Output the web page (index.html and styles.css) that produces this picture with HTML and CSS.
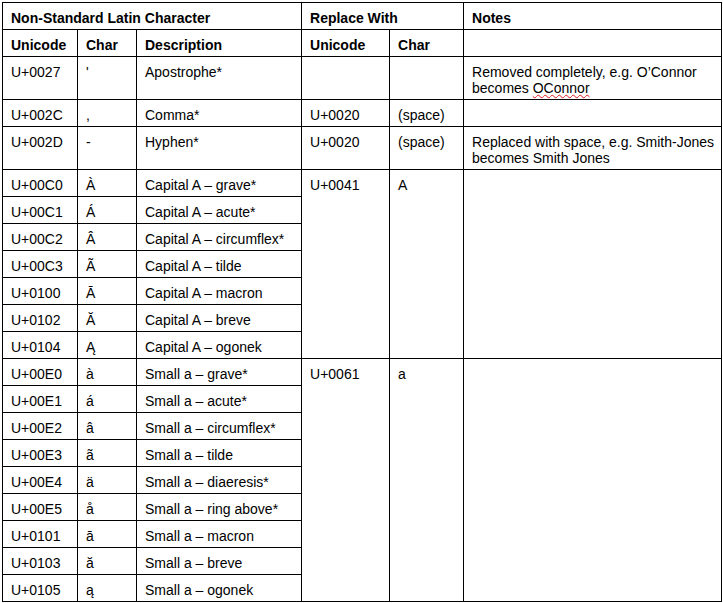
FILE: index.html
```html
<!DOCTYPE html>
<html lang="en">
<head>
<meta charset="utf-8">
<title>Non-Standard Latin Characters</title>
<link rel="stylesheet" href="styles.css">
</head>
<body>
<table class="chars">
  <colgroup>
    <col class="c-uni">
    <col class="c-char">
    <col class="c-desc">
    <col class="c-runi">
    <col class="c-rchar">
    <col class="c-notes">
  </colgroup>
  <thead>
    <tr class="head">
      <th colspan="3">Non-Standard Latin Character</th>
      <th colspan="2">Replace With</th>
      <th>Notes</th>
    </tr>
    <tr class="head">
      <th>Unicode</th>
      <th>Char</th>
      <th>Description</th>
      <th>Unicode</th>
      <th>Char</th>
      <th></th>
    </tr>
  </thead>
  <tbody>
    <tr>
      <td>U+0027</td><td>'</td><td>Apostrophe*</td><td></td><td></td>
      <td>Removed completely, e.g. O’Connor becomes <span class="spell">OConnor</span></td>
    </tr>
    <tr>
      <td>U+002C</td><td>,</td><td>Comma*</td><td>U+0020</td><td>(space)</td><td></td>
    </tr>
    <tr>
      <td>U+002D</td><td>-</td><td>Hyphen*</td><td>U+0020</td><td>(space)</td>
      <td>Replaced with space, e.g. Smith-Jones<br>becomes Smith Jones</td>
    </tr>
    <tr>
      <td>U+00C0</td><td>À</td><td>Capital A – grave*</td>
      <td rowspan="7">U+0041</td><td rowspan="7">A</td><td rowspan="7"></td>
    </tr>
    <tr><td>U+00C1</td><td>Á</td><td>Capital A – acute*</td></tr>
    <tr><td>U+00C2</td><td>Â</td><td>Capital A – circumflex*</td></tr>
    <tr><td>U+00C3</td><td>Ã</td><td>Capital A – tilde</td></tr>
    <tr><td>U+0100</td><td>Ā</td><td>Capital A – macron</td></tr>
    <tr><td>U+0102</td><td>Ă</td><td>Capital A – breve</td></tr>
    <tr><td>U+0104</td><td>Ą</td><td>Capital A – ogonek</td></tr>
    <tr>
      <td>U+00E0</td><td>à</td><td>Small a – grave*</td>
      <td rowspan="9">U+0061</td><td rowspan="9">a</td><td rowspan="9"></td>
    </tr>
    <tr><td>U+00E1</td><td>á</td><td>Small a – acute*</td></tr>
    <tr><td>U+00E2</td><td>â</td><td>Small a – circumflex*</td></tr>
    <tr><td>U+00E3</td><td>ã</td><td>Small a – tilde</td></tr>
    <tr><td>U+00E4</td><td>ä</td><td>Small a – diaeresis*</td></tr>
    <tr><td>U+00E5</td><td>å</td><td>Small a – ring above*</td></tr>
    <tr><td>U+0101</td><td>ā</td><td>Small a – macron</td></tr>
    <tr><td>U+0103</td><td>ă</td><td>Small a – breve</td></tr>
    <tr><td>U+0105</td><td>ą</td><td>Small a – ogonek</td></tr>
  </tbody>
</table>
</body>
</html>
```

FILE: styles.css
```css
html, body {
  margin: 0;
  padding: 0;
  background: #ffffff;
  overflow: hidden;
}

body {
  padding: 2px 0 0 2px;
  font-family: "Liberation Sans", Arial, sans-serif;
  font-size: 14px;
  color: #000000;
}

.chars {
  border-collapse: collapse;
  table-layout: fixed;
  width: 719px;
}

.c-uni { width: 75px; }
.c-char { width: 59px; }
.c-desc { width: 165px; }
.c-runi { width: 88px; }
.c-rchar { width: 74px; }
.c-notes { width: 258px; }

.chars th,
.chars td {
  border: 1px solid #000000;
  padding: 7px 4px 3px 8px;
  line-height: 16px;
  height: 16px;
  text-align: left;
  vertical-align: top;
  font-weight: normal;
  white-space: normal;
}

.chars th {
  font-weight: bold;
}

.spell {
  text-decoration: underline wavy #e01b1b;
  text-decoration-thickness: 1px;
  text-underline-offset: 1px;
}
```
